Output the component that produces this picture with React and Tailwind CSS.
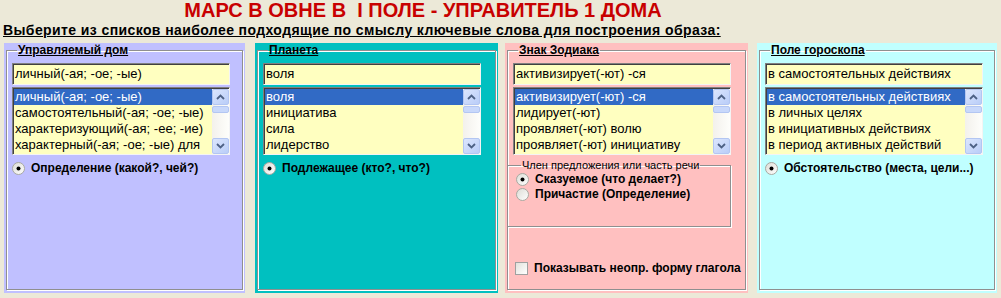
import React from "react";

function Chevron({ up }) {
    return (
        <svg width="9" height="6" viewBox="0 0 9 6" className="block">
            <polyline
                points={up ? "1,5 4.5,1.5 8,5" : "1,1 4.5,4.5 8,1"}
                fill="none"
                stroke="#4d6185"
                strokeWidth="1.8"
            />
        </svg>
    );
}

function ScrollBar() {
    return (
        <div className="w-[17px] flex flex-col bg-gradient-to-r from-[#f3f1ec] to-[#fefefb]">
            <div className="h-[16px] flex items-center justify-center rounded-[2px] border border-[#b3c6f2] bg-gradient-to-br from-[#dce6fd] to-[#b9cdf8]">
                <Chevron up />
            </div>
            <div className="mt-[1px] h-[7px] rounded-[2px] border border-[#b3c6f2] bg-[#c8d8fb]" />
            <div className="flex-1" />
            <div className="h-[16px] flex items-center justify-center rounded-[2px] border border-[#b3c6f2] bg-gradient-to-br from-[#dce6fd] to-[#b9cdf8]">
                <Chevron />
            </div>
        </div>
    );
}

function Radio({ checked }) {
    return (
        <svg width="13" height="13" viewBox="0 0 13 13" className="shrink-0">
            <defs>
                <linearGradient id="rg" x1="0" y1="0" x2="1" y2="1">
                    <stop offset="0" stopColor="#dcdcd5" />
                    <stop offset="1" stopColor="#ffffff" />
                </linearGradient>
            </defs>
            <circle cx="6.5" cy="6.5" r="6" fill="url(#rg)" stroke="#a8a8a0" />
            {checked && <circle cx="6.5" cy="6.5" r="2" fill="#000" />}
        </svg>
    );
}

function Panel({ bg, width, margin, legend, value, items, radio, children }) {
    return (
        <div className={`${bg} ${width} ${margin} h-[250px] px-[2px] pb-[3px] flex`}>
            <fieldset className="flex-1 min-w-0 border border-[#8f8f8f] shadow-[inset_1px_1px_0_#fff,1px_1px_0_#fff] px-[5px]">
                <legend className="ml-[5px] px-[1px] text-[12px] leading-[14px] font-bold underline">
                    {legend}
                </legend>
                <div className="mt-[6px] w-[218px] h-[22px] bg-[#ffffc0] border border-[#808080] border-b-[#f4f4f4] border-r-[#f4f4f4] shadow-[inset_1px_1px_0_#404040] pl-[2px] text-[13px] leading-[20px] whitespace-nowrap overflow-hidden">
                    {value}
                </div>
                <div className="mt-[2px] w-[218px] h-[68px] bg-[#ffffc0] border border-[#808080] border-b-[#f4f4f4] border-r-[#f4f4f4] shadow-[inset_1px_1px_0_#404040] pt-[1px] pl-[1px] flex">
                    <div className="flex-1 min-w-0 overflow-hidden text-[13px] leading-[16px] whitespace-nowrap">
                        {items.map((item, i) => (
                            <div
                                key={item}
                                className={
                                    i === 0
                                        ? "h-[16px] pl-[1px] bg-[#316ac5] text-white"
                                        : "h-[16px] pl-[1px]"
                                }
                            >
                                {item}
                            </div>
                        ))}
                    </div>
                    <ScrollBar />
                </div>
                {radio && (
                    <div className="mt-[6px] flex items-center gap-[6px] text-[12px] font-bold leading-[14px]">
                        <Radio checked />
                        <span>{radio}</span>
                    </div>
                )}
                {children}
            </fieldset>
        </div>
    );
}

export default function App() {
    return (
        <div className="w-[1001px] h-[298px] bg-[#ece9d8] font-['Liberation_Sans',Arial,sans-serif] text-black overflow-hidden">
            <div className="pt-[1px] h-[22px] text-center text-[20px] leading-[19px] font-bold text-[#c80000]">
                <span className="inline-block ml-[-155px]">МАРС В ОВНЕ В&nbsp; I ПОЛЕ - УПРАВИТЕЛЬ 1 ДОМА</span>
            </div>
            <div className="pl-[3px] h-[21px] text-[14px] leading-[16px] font-bold underline tracking-[0.4px]">
                Выберите из списков наиболее подходящие по смыслу ключевые слова для построения образа:
            </div>
            <div className="flex pl-[4px]">
                <Panel
                    bg="bg-[#c0c0ff]"
                    width="w-[241px]"
                    margin=""
                    legend="Управляемый дом"
                    value="личный(-ая; -ое; -ые)"
                    items={[
                        "личный(-ая; -ое; -ые)",
                        "самостоятельный(-ая; -ое; -ые)",
                        "характеризующий(-ая; -ее; -ие)",
                        "характерный(-ая; -ое; -ые) для",
                    ]}
                    radio="Определение (какой?, чей?)"
                />
                <Panel
                    bg="bg-[#00c0c0]"
                    width="w-[243px]"
                    margin="ml-[10px]"
                    legend="Планета"
                    value="воля"
                    items={["воля", "инициатива", "сила", "лидерство"]}
                    radio="Подлежащее (кто?, что?)"
                />
                <Panel
                    bg="bg-[#ffc0c0]"
                    width="w-[243px]"
                    margin="ml-[7px]"
                    legend="Знак Зодиака"
                    value="активизирует(-ют) -ся"
                    items={[
                        "активизирует(-ют) -ся",
                        "лидирует(-ют)",
                        "проявляет(-ют) волю",
                        "проявляет(-ют) инициативу",
                    ]}
                >
                    <fieldset className="mt-[4px] ml-[-6px] w-[224px] h-[68px] border border-[#8f8f8f] shadow-[inset_1px_1px_0_#fff,1px_1px_0_#fff] px-[8px]">
                        <legend className="ml-[5px] px-[1px] text-[11px] leading-[13px]">
                            Член предложения или часть речи
                        </legend>
                        <div className="mt-[1px] flex flex-col gap-[2px] text-[12px] font-bold leading-[13px]">
                            <div className="flex items-center gap-[6px]">
                                <Radio checked />
                                <span>Сказуемое (что делает?)</span>
                            </div>
                            <div className="flex items-center gap-[6px]">
                                <Radio />
                                <span>Причастие (Определение)</span>
                            </div>
                        </div>
                    </fieldset>
                    <div className="mt-[34px] ml-[2px] flex items-center gap-[6px] text-[12px] font-bold leading-[14px] whitespace-nowrap">
                        <div className="w-[13px] h-[13px] shrink-0 border border-[#a0a0a0] bg-gradient-to-br from-[#e2e2dc] to-white" />
                        <span>Показывать неопр. форму глагола</span>
                    </div>
                </Panel>
                <Panel
                    bg="bg-[#c0ffff]"
                    width="w-[240px]"
                    margin="ml-[9px]"
                    legend="Поле гороскопа"
                    value="в самостоятельных действиях"
                    items={[
                        "в самостоятельных действиях",
                        "в личных целях",
                        "в инициативных действиях",
                        "в период активных действий",
                    ]}
                    radio="Обстоятельство (места, цели...)"
                />
            </div>
        </div>
    );
}
